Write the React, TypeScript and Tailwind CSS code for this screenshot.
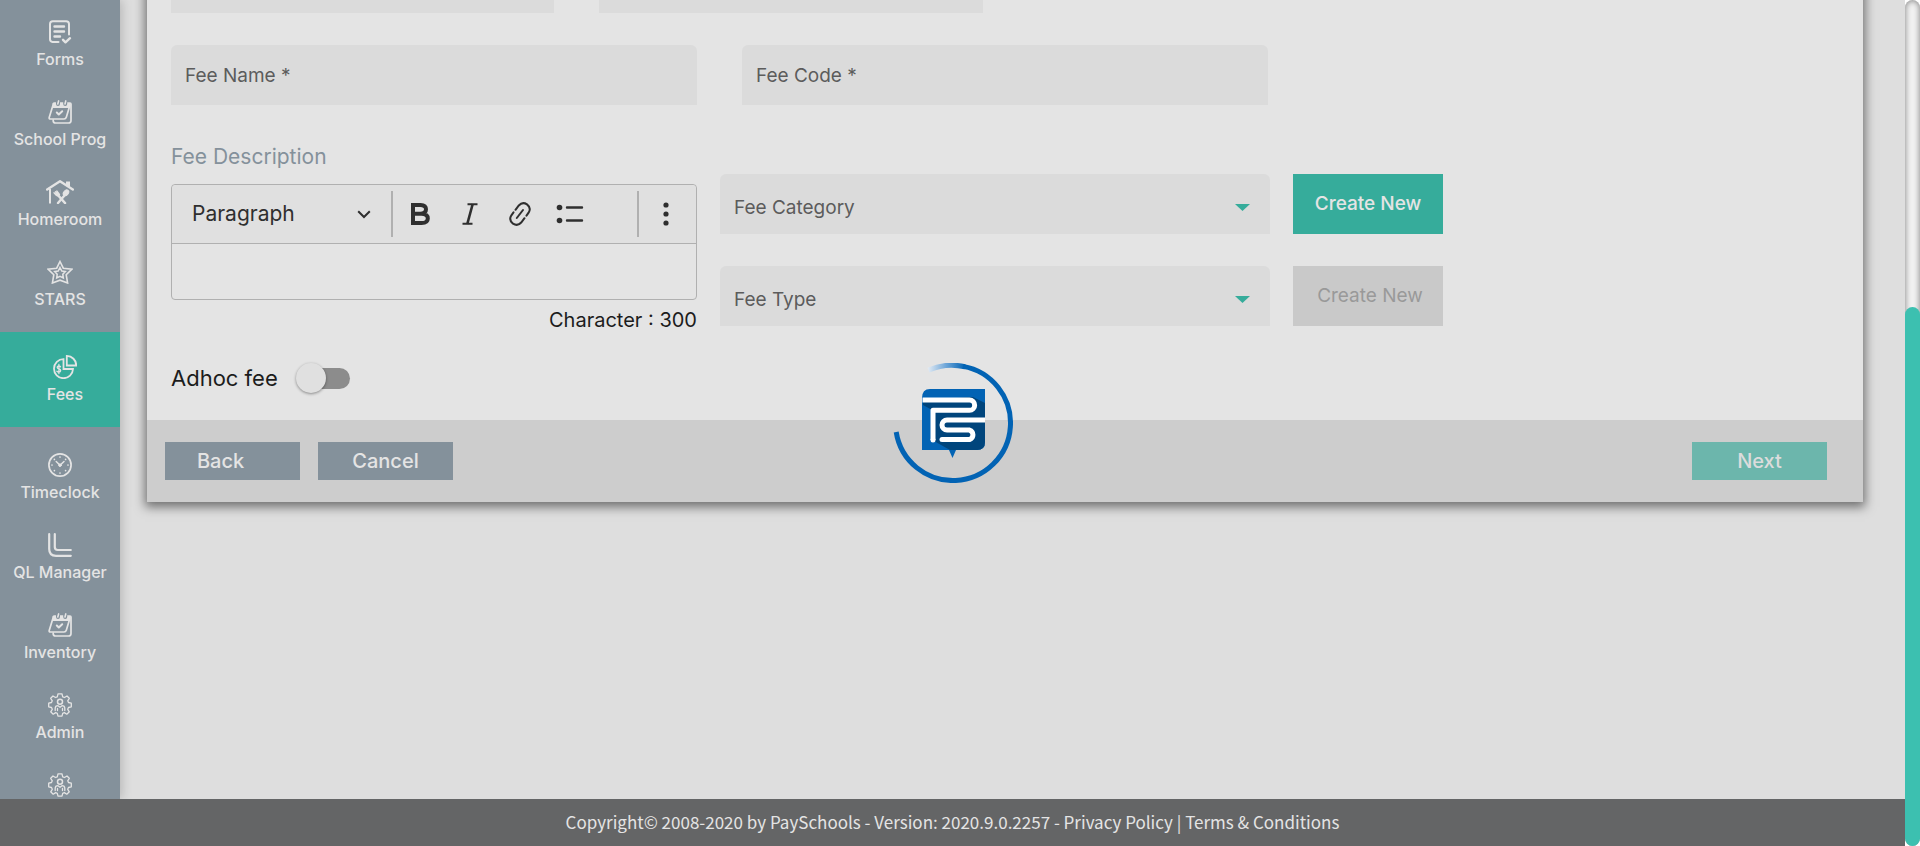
import React from "react";

type IconName = "forms" | "calendar" | "home" | "star" | "pie" | "clock" | "lines" | "gear";

function NavIcon({ name }: { name: IconName }) {
  const base = {
    width: 24,
    height: 24,
    viewBox: "0 0 24 24",
    fill: "none",
    stroke: "currentColor",
    strokeWidth: 1.7,
    strokeLinecap: "round" as const,
    strokeLinejoin: "round" as const,
    "aria-hidden": true,
  };
  switch (name) {
    case "forms":
      return (
        <svg {...base} strokeWidth={2}>
          <path d="M10.5 22H4.5A2.8 2.8 0 0 1 2 19.300V4A2.800 2.800 0 0 1 4.800 1.200H18.200A2.800 2.800 0 0 1 21 4V14.500" />
          <path d="M6.500 6.500H16M6.500 11.500H16M6.500 16.500H12M15 19.800L17.500 22.300L22 18.200" strokeWidth={2.400} />
        </svg>
      );
    case "calendar":
      return (
        <svg {...base}>
          <path d="M5.500 3H22.500L22.200 8H4Z" fill="currentColor" stroke="none" />
          <path d="M5.300 4.200L1.200 17.500Q.8 19 2.500 19H16Q17.800 19 18.300 17.300L22 5" />
          <path d="M5.200 20V21Q5.500 23 7.500 23H20.500Q23 23 23 20.500V4Q23 3 22 3H6Q5.400 3 5.200 4" />
          <path d="M10 1V4M17.200 1V4" stroke="#84919b" strokeWidth={4} />
          <path d="M10.600 .9L9.800 4M17.800 .9L17 4" strokeWidth={1.600} />
          <path d="M8.800 12.500L10.800 14.500L14.200 11.300" strokeWidth={2} />
        </svg>
      );
    case "home":
      return (
        <svg {...base} width={28} viewBox="-2 0 28 24">
          <path d="M-.8 9.500L12 1.300L24.800 9.500" strokeWidth={2.400} />
          <path d="M2 9V23.500" strokeLinecap="butt" strokeWidth={2} />
          <path d="M18 1.500H22V7L18 4.500Z" fill="currentColor" stroke="none" />
          <path d="M8.500 13.500L17 23" strokeWidth={2.600} />
          <path d="M16.500 15.500L10 23" strokeWidth={2.400} />
          <path d="M6 12.800L8.500 15.500Q10 16.500 11.500 14.500L8.800 11M7.400 11.800L10 14.500" strokeWidth={1.300} />
          <ellipse cx="18" cy="12.800" rx="2.300" ry="3.200" transform="rotate(42 18 12.800)" fill="currentColor" strokeWidth={1} />
        </svg>
      );
    case "star":
      return (
        <svg {...base} width={26} viewBox="-1 0 26 24" strokeLinejoin="miter" strokeWidth={1.600}>
          <path d="M12 1.500L15.300 8.200L24 9.200L18.200 14.700L19.600 23L12 20.200L4.400 23L5.800 14.700L0 9.200L8.700 8.200Z" />
          <path d="M12 7.500L13.800 11.100L17.300 11.600L14.800 14.200L15.300 18L12 16.300L8.700 18L9.200 14.200L6.700 11.600L10.200 11.100Z" strokeWidth={1.500} />
        </svg>
      );
    case "pie":
      return (
        <svg {...base} strokeLinejoin="miter" strokeWidth={1.800}>
          <path d="M10.500 4.200A9.500 9.500 0 1 0 20 14H10.500Z" />
          <path d="M13.800 .9V10.500H23.200A9.500 9.500 0 0 0 13.800 .9Z" />
          <path d="M7.500 11.700Q6.800 10.900 5.700 11Q4.100 11.200 4.200 12.500Q4.300 13.700 6 14Q7.700 14.400 7.700 15.700Q7.600 17.100 5.800 17.100Q4.600 17 3.900 16.200M5.900 9.500V18.500" strokeWidth={1.300} />
        </svg>
      );
    case "clock":
      return (
        <svg {...base}>
          <circle cx="12" cy="12" r="11.100" />
          <path d="M8.200 8.500L12 12.200L16 8.500" strokeWidth={1.500} />
          <circle cx="12" cy="12.200" r="1.300" fill="currentColor" strokeWidth={1} />
          <path d="M12 4H12.010M12 20H12.010M4 12H4.010M20 12H20.010M6.400 6.400H6.410M17.600 6.400H17.610M6.400 17.600H6.410M17.600 17.600H17.610" strokeWidth={1.700} />
        </svg>
      );
    case "lines":
      return (
        <svg {...base} strokeWidth={2.200}>
          <path d="M1.200 1.200V16Q1.200 22.800 8 22.800H22.800" />
          <path d="M6.800 1.200V14Q6.800 17 9.800 17H22.800" />
        </svg>
      );
    default:
      return (
        <svg {...base} strokeWidth={1.300}>
          <path d="M10 .8H14L14.700 3.800L16.500 4.500L19 3L21.300 5.300L19.700 7.800L20.500 9.500L23.300 10.200V13.800L20.500 14.500L19.700 16.300L21.300 18.800L18.800 21.200L16.300 19.600L14.700 20.300L14 23.200H10L9.300 20.300L7.700 19.600L5.200 21.200L2.700 18.800L4.300 16.300L3.500 14.500L.7 13.800V10.200L3.500 9.500L4.300 7.800L2.700 5.300L5 3L7.500 4.500L9.300 3.800Z" />
          <circle cx="12" cy="8.700" r="2.500" strokeWidth={1.500} />
          <path d="M7.200 17.500V15.500Q7.200 12.700 10 12.700L12 14.300L14 12.700Q16.800 12.700 16.800 15.500V17.500M9.500 15.500V17.500M14.500 15.500V17.500" />
        </svg>
      );
  }
}

const navItems: { label?: string; icon: IconName; active?: boolean }[] = [
  { label: "Forms", icon: "forms" },
  { label: "School Prog", icon: "calendar" },
  { label: "Homeroom", icon: "home" },
  { label: "STARS", icon: "star" },
  { label: "Fees", icon: "pie", active: true },
  { label: "Timeclock", icon: "clock" },
  { label: "QL Manager", icon: "lines" },
  { label: "Inventory", icon: "calendar" },
  { label: "Admin", icon: "gear" },
  { icon: "gear" },
];

function Sidebar() {
  return (
    <nav className="z-10 w-[120px] shrink-0 overflow-hidden bg-[#84919b] shadow-[2px_0_10px_rgba(0,0,0,0.18)]">
      {navItems.map((item, i) => (
        <a
          key={i}
          href="#"
          aria-label={item.label ?? "Settings"}
          className={
            item.active
              ? "mt-3 mb-1.5 flex h-[95px] flex-col items-center gap-1 bg-[#36ac9b] pt-[23px] pl-2.5 text-[#e4e4e4]"
              : "flex h-20 flex-col items-center gap-1 pt-5 text-[#e4e4e4]"
          }
        >
          <NavIcon name={item.icon} />
          {item.label && <span className="text-base leading-[22px] font-medium whitespace-nowrap">{item.label}</span>}
        </a>
      ))}
    </nav>
  );
}

function TextField({ id, label }: { id: string; label: string }) {
  return (
    <div className="flex h-[60px] items-center rounded-t-md bg-[#dbdbdb] px-3.5">
      <label htmlFor={id} className="pt-0.5 text-[19px] text-[#5c5c5c]">
        {label}
      </label>
      <input id={id} type="text" className="h-full min-w-0 flex-1 bg-transparent pl-2 text-[19px] outline-none" />
    </div>
  );
}

function SelectField({ label }: { label: string }) {
  return (
    <div className="relative">
      <select
        aria-label={label}
        className="h-[60px] w-full appearance-none rounded-t-md bg-[#dbdbdb] px-3.5 pt-2 text-[19px] text-[#5c5c5c] outline-none"
      >
        <option>{label}</option>
      </select>
      <svg className="pointer-events-none absolute top-[30px] right-5" width="15" height="7" viewBox="0 0 15 7" aria-hidden="true">
        <path d="M0 0H15L7.500 7Z" fill="#36ac9b" />
      </svg>
    </div>
  );
}

function ToolButton({ label, children }: { label: string; children: React.ReactNode }) {
  return (
    <button type="button" aria-label={label} className="flex size-10 shrink-0 items-center justify-center text-[#2f2f2f]">
      {children}
    </button>
  );
}

function Editor() {
  return (
    <div>
      <label htmlFor="description" className="mt-[38px] block text-[21px] leading-7 text-[#84919b]">
        Fee Description
      </label>
      <div className="mt-[13px] rounded-sm border border-[#b0b0b0]">
        <div className="flex h-[59px] items-center rounded-t-sm border-b border-[#b0b0b0] bg-[#e0e0e0]">
          <button type="button" className="flex h-full w-[219px] items-center justify-between px-5 text-[21px] text-[#2f2f2f]">
            Paragraph
            <svg width="14" height="9" viewBox="0 0 14 9" fill="none" stroke="currentColor" strokeWidth="2" aria-hidden="true">
              <path d="M1.200 1.200L7 7L12.800 1.200" />
            </svg>
          </button>
          <div className="h-[46px] w-0.5 bg-[#b0b0b0]" />
          <div className="ml-[7px] flex flex-1 gap-2.5">
            <ToolButton label="Bold">
              <svg width="20" height="22" viewBox="0 0 20 22" fill="none" stroke="currentColor" strokeWidth="4" aria-hidden="true">
                <path d="M3 2H10.500Q16 2.300 16 6.300Q16 10.400 10.500 10.700H3ZM3 10.700H11.500Q17.800 11 17.800 15.400Q17.800 19.800 11.500 20H3Z" />
              </svg>
            </ToolButton>
            <ToolButton label="Italic">
              <svg width="16" height="22" viewBox="0 0 16 22" fill="none" stroke="currentColor" strokeWidth="2" aria-hidden="true">
                <path d="M5.500 1.200H15.500M.5 20.800H10.500" />
                <path d="M10.700 1L5.300 21" strokeWidth="2.600" />
              </svg>
            </ToolButton>
            <ToolButton label="Link">
              <svg width="22" height="24" viewBox="0 0 22 24" fill="none" stroke="currentColor" strokeWidth="2" strokeLinecap="round" aria-hidden="true">
                <path d="M6.500 7.800L9.800 3.500Q13.500-.6 18 2.400Q22.600 6 19.600 10.700L17.500 13.600" />
                <path d="M15.500 16.200L12.200 20.500Q8.500 24.600 4 21.600Q-.6 18 2.400 13.300L4.500 10.400" />
                <path d="M7.800 16L14 8" />
              </svg>
            </ToolButton>
            <ToolButton label="Bulleted list">
              <svg width="28" height="20" viewBox="0 0 28 20" fill="none" stroke="currentColor" strokeWidth="2.400" strokeLinecap="round" aria-hidden="true">
                <path d="M11 3.500H26M11 16.500H26" />
                <circle cx="3.500" cy="3.500" r="2.800" fill="currentColor" stroke="none" />
                <circle cx="3.500" cy="16.500" r="2.800" fill="currentColor" stroke="none" />
              </svg>
            </ToolButton>
          </div>
          <div className="h-[46px] w-0.5 bg-[#b0b0b0]" />
          <div className="mr-2.5 ml-[7px]">
            <ToolButton label="Show more items">
              <svg width="6" height="24" viewBox="0 0 6 24" fill="currentColor" aria-hidden="true">
                <circle cx="3" cy="3" r="2.600" />
                <circle cx="3" cy="12" r="2.600" />
                <circle cx="3" cy="21" r="2.600" />
              </svg>
            </ToolButton>
          </div>
        </div>
        <textarea id="description" className="block h-[55px] w-full resize-none bg-transparent px-3 py-2 text-lg outline-none" />
      </div>
      <p className="mt-1.5 text-right text-[20px] leading-7 text-[#1c1c1c]">Character : 300</p>
    </div>
  );
}

function Loader() {
  return (
    <div className="pointer-events-none absolute inset-0 z-20 flex items-center justify-center" role="status" aria-label="Loading">
      <svg width="120" height="120" viewBox="0 0 120 120" fill="none">
        <defs>
          <linearGradient id="arcFade" x1="34" y1="0" x2="72" y2="0" gradientUnits="userSpaceOnUse">
            <stop offset="0" stopColor="#e8eef5" />
            <stop offset="0.500" stopColor="#6ea6d8" />
            <stop offset="1" stopColor="#0263b4" />
          </linearGradient>
        </defs>
        <path d="M35.500 7.100A57.500 57.500 0 0 1 72 3.800" stroke="url(#arcFade)" strokeWidth="5" />
        <path d="M70 3.400A57.500 57.500 0 1 1 3.200 69" stroke="#0263b4" strokeWidth="5" />
        <path d="M37 26H92V79Q92 87 84 87H63L59.500 95L56 87H29V35Q29 26 37 26Z" fill="#0263b4" />
        <path d="M80 34L92 40V79Q92 87 84 87H57L41 78V48L30 42V37Z" fill="#00457c" />
        <g stroke="#fff" strokeWidth="5">
          <path d="M29.500 37H76.500A5.100 5.100 0 0 1 76.500 47.300H40V77" strokeLinecap="butt" strokeLinejoin="round" />
          <path d="M92 57H54A5 5 0 0 0 54 67H76.500A5 5 0 0 1 76.500 76.500H49" />
        </g>
        <circle cx="40" cy="77" r="2.500" fill="#fff" />
        <circle cx="49" cy="76.500" r="2.500" fill="#fff" />
      </svg>
    </div>
  );
}

export default function App() {
  return (
    <div className="flex h-screen overflow-hidden bg-white font-['Inter','Noto_Sans',sans-serif]">
      <div className="relative flex min-w-0 flex-1 flex-col bg-[#dedede]">
        <div className="flex min-h-0 flex-1">
          <Sidebar />
          <main className="min-w-0 flex-1 overflow-hidden pr-[42px] pl-[27px]">
            <form className="-mt-12 bg-[#e4e4e4] shadow-[0_3px_10px_2px_rgba(0,0,0,0.5)]">
              <div className="px-6 pb-[25px]">
                <div className="grid grid-cols-4 gap-x-[45px]">
                  <div className="h-[61px] bg-[#dbdbdb]" />
                  <div className="h-[61px] bg-[#dbdbdb]" />
                </div>
                <div className="mt-8 grid grid-cols-3 gap-x-[45px]">
                  <TextField id="fee-name" label="Fee Name *" />
                  <TextField id="fee-code" label="Fee Code *" />
                </div>
                <div className="grid grid-cols-[526fr_550fr_546fr] gap-x-[23px]">
                  <Editor />
                  <div className="mt-[69px] flex flex-col gap-8">
                    <SelectField label="Fee Category" />
                    <SelectField label="Fee Type" />
                  </div>
                  <div className="mt-[69px] flex flex-col gap-8">
                    <button type="button" className="h-[60px] w-[150px] bg-[#36ac9b] text-[19px] font-medium text-[#e4e4e4]">
                      Create New
                    </button>
                    <button type="button" disabled className="h-[60px] w-[150px] bg-[#c9c9c9] pl-1 text-[19px] text-[#999999]">
                      Create New
                    </button>
                  </div>
                </div>
                <div className="mt-[27px] flex h-[34px] items-center gap-[18px]">
                  <label htmlFor="adhoc" className="text-[22px] text-[#1c1c1c]">
                    Adhoc fee
                  </label>
                  <span className="relative flex h-[30px] w-[54px] items-center">
                    <input id="adhoc" type="checkbox" role="switch" className="ml-1 h-[21px] w-[50px] appearance-none rounded-full bg-[#8c8c8c]" />
                    <span className="pointer-events-none absolute top-0 left-0 size-[30px] rounded-full bg-[#e0e0e0] shadow-[0_1px_3px_rgba(0,0,0,0.4)]" />
                  </span>
                </div>
              </div>
              <div className="flex h-[82px] items-center gap-[18px] bg-[#cdcdcd] pr-9 pl-[18px] text-xl font-medium text-[#e4e4e4]">
                <button type="button" className="h-[38px] w-[135px] bg-[#84919b] pr-6">
                  Back
                </button>
                <button type="button" className="h-[38px] w-[135px] bg-[#84919b]">
                  Cancel
                </button>
                <button type="button" disabled className="ml-auto h-[38px] w-[135px] bg-[#6cb6ac] text-[#dcdcdc]">
                  Next
                </button>
              </div>
            </form>
          </main>
        </div>
        <footer className="z-10 flex h-[47px] shrink-0 items-center justify-center bg-[#646566] pb-0.5 font-['Noto_Sans_CJK_SC',sans-serif] text-[17px] text-[#e4e4e4]">
          <p>
            Copyright© 2008-2020 by PaySchools - Version: 2020.9.0.2257 - <a href="#">Privacy Policy</a> | <a href="#">Terms &amp; Conditions</a>
          </p>
        </footer>
        <Loader />
      </div>
      <div className="flex w-[15px] shrink-0 flex-col justify-end rounded-full bg-[#f2f2f2] shadow-[inset_0_0_6px_rgba(0,0,0,0.5)]">
        <div className="h-[539px] rounded-full bg-[#3cc0b0]" />
      </div>
    </div>
  );
}
